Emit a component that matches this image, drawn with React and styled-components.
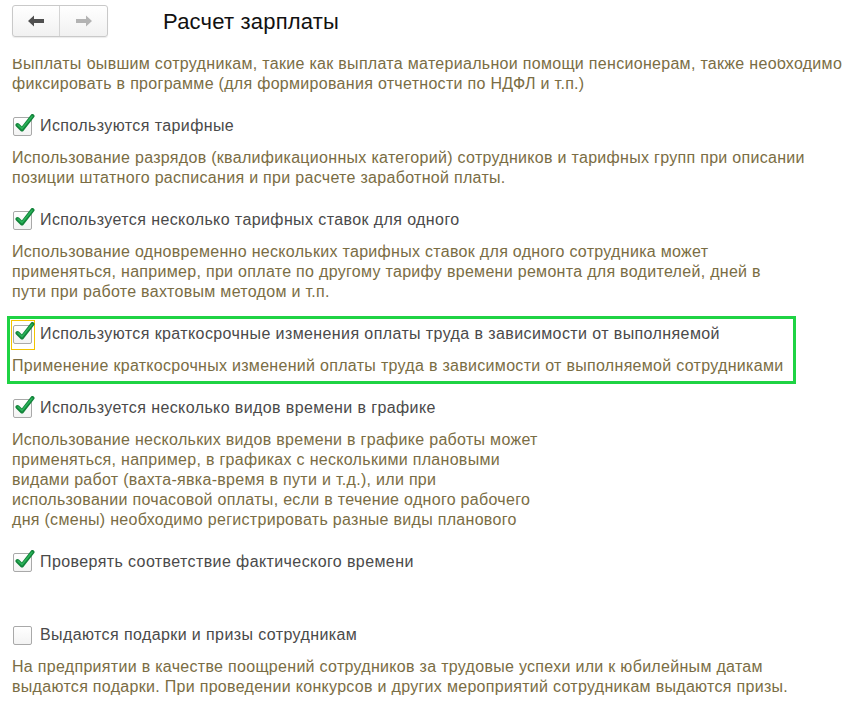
import styled, { createGlobalStyle } from "styled-components";

const Global = createGlobalStyle`
  html, body { margin: 0; padding: 0; background: #fff; }
  body { font-family: Arial, "Liberation Sans", sans-serif; }
`;

const Page = styled.div`
  width: 849px;
  height: 716px;
  display: flex;
  flex-direction: column;
  overflow: hidden;
  background: #fff;
`;

const Header = styled.header`
  height: 59px;
  flex: none;
  display: flex;
  align-items: flex-start;
  padding: 5px 0 0 12px;
  box-sizing: border-box;
`;

const NavGroup = styled.div`
  display: flex;
  height: 32px;
  border: 1px solid #c9c9c9;
  border-radius: 3px;
  box-sizing: border-box;
  background: linear-gradient(#ffffff, #f1f1f1);
  box-shadow: 0 1px 1px rgb(0 0 0 / 8%);
`;

const NavButton = styled.button`
  width: ${p => p.w}px;
  height: 100%;
  border: none;
  border-left: ${p => p.divided ? "1px solid #d4d4d4" : "none"};
  background: transparent;
  padding: 0;
  display: grid;
  place-content: center;
  color: ${p => p.disabled ? "#b3b3b3" : "#4f4f4f"};
`;

const Title = styled.h1`
  margin: 3px 0 0 55px;
  font-size: 22px;
  letter-spacing: 0.2px;
  font-weight: normal;
  color: #111;
  line-height: 28px;
`;

const Scroll = styled.main`
  flex: 1;
  overflow: hidden;
  padding: 0 12px;
`;

const Inner = styled.div`
  margin-top: -5px;
`;

const Section = styled.section`
  position: relative;
  margin-bottom: ${p => p.gap ?? 22}px;

  ${p => p.highlighted && `
    &::after {
      content: "";
      position: absolute;
      top: -8px;
      bottom: -8px;
      left: -5px;
      right: 41px;
      border: 3px solid #1fd344;
      pointer-events: none;
    }
  `}
`;

const Label = styled.label`
  display: flex;
  align-items: center;
  gap: 8px;
  height: 20px;
  font-size: 16px;
  letter-spacing: 0.4px;
  color: #4a4a4a;
  margin-bottom: 12px;
  white-space: nowrap;
`;

const Box = styled.span`
  position: relative;
  flex: none;
  width: 19px;
  height: 19px;
  margin-left: 1px;
  box-sizing: border-box;
  border: 1px solid #a9a9a9;
  border-radius: 2px;
  background: linear-gradient(#ffffff, #f3f3f3);

  svg {
    position: absolute;
    left: 1px;
    top: -4px;
  }

  ${p => p.focused && `
    &::before {
      content: "";
      position: absolute;
      top: -6px;
      bottom: -7px;
      left: -3px;
      right: -4px;
      border: 1px solid #f3c400;
    }
  `}
`;

const Desc = styled.p`
  margin: 0;
  font-size: 16px;
  letter-spacing: 0.3px;
  line-height: 20px;
  color: #7a6d44;
  white-space: nowrap;
`;

const Arrow = ({ dir }) => (
  <svg width="18" height="12" viewBox="0 0 18 12">
    <path
      d="M1 6 L7 0.5 L7 4 L17 4 L17 8 L7 8 L7 11.5 Z"
      fill="currentColor"
      transform={dir === "right" ? "translate(18 0) scale(-1 1)" : undefined}
    />
  </svg>
);

const Check = () => (
  <svg width="20" height="20" viewBox="0 0 20 20">
    <path d="M2.5 11 L7 15.5 L17.5 2" fill="none" stroke="#12833a" strokeWidth="4" strokeLinecap="round" strokeLinejoin="round" />
    <path d="M3 11 L7 14.6 L17 2.4" fill="none" stroke="#2bb35a" strokeWidth="1.6" strokeLinecap="round" strokeLinejoin="round" />
  </svg>
);

const Option = ({ label, checked, focused, highlighted, gap, lines }) => (
  <Section highlighted={highlighted} gap={gap}>
    <Label>
      <Box focused={focused}>{checked && <Check />}</Box>
      {label}
    </Label>
    {lines && (
      <Desc>
        {lines.map((l, i) => (
          <span key={i}>{l}{i < lines.length - 1 && <br />}</span>
        ))}
      </Desc>
    )}
  </Section>
);

export default function App() {
  return (
    <Page>
      <Global />
      <Header>
        <NavGroup>
          <NavButton w={46}><Arrow dir="left" /></NavButton>
          <NavButton w={48} divided disabled><Arrow dir="right" /></NavButton>
        </NavGroup>
        <Title>Расчет зарплаты</Title>
      </Header>
      <Scroll>
        <Inner>
          <Section>
            <Desc>
              Выплаты бывшим сотрудникам, такие как выплата материальной помощи пенсионерам, также необходимо<br />
              фиксировать в программе (для формирования отчетности по НДФЛ и т.п.)
            </Desc>
          </Section>
          <Option
            checked
            label="Используются тарифные"
            lines={[
              "Использование разрядов (квалификационных категорий) сотрудников и тарифных групп при описании",
              "позиции штатного расписания и при расчете заработной платы.",
            ]}
          />
          <Option
            checked
            label="Используется несколько тарифных ставок для одного"
            lines={[
              "Использование одновременно нескольких тарифных ставок для одного сотрудника может",
              "применяться, например, при оплате по другому тарифу времени ремонта для водителей, дней в",
              "пути при работе вахтовым методом и т.п.",
            ]}
          />
          <Option
            checked
            focused
            highlighted
            label="Используются краткосрочные изменения оплаты труда в зависимости от выполняемой"
            lines={[
              "Применение краткосрочных изменений оплаты труда в зависимости от выполняемой сотрудниками",
            ]}
          />
          <Option
            checked
            label="Используется несколько видов времени в графике"
            lines={[
              "Использование нескольких видов времени в графике работы может",
              "применяться, например, в графиках с несколькими плановыми",
              "видами работ (вахта-явка-время в пути и т.д.), или при",
              "использовании почасовой оплаты, если в течение одного рабочего",
              "дня (смены) необходимо регистрировать разные виды планового",
            ]}
          />
          <Option checked label="Проверять соответствие фактического времени" gap={53} />
          <Option
            label="Выдаются подарки и призы сотрудникам"
            lines={[
              "На предприятии в качестве поощрений сотрудников за трудовые успехи или к юбилейным датам",
              "выдаются подарки. При проведении конкурсов и других мероприятий сотрудникам выдаются призы.",
            ]}
          />
        </Inner>
      </Scroll>
    </Page>
  );
}
